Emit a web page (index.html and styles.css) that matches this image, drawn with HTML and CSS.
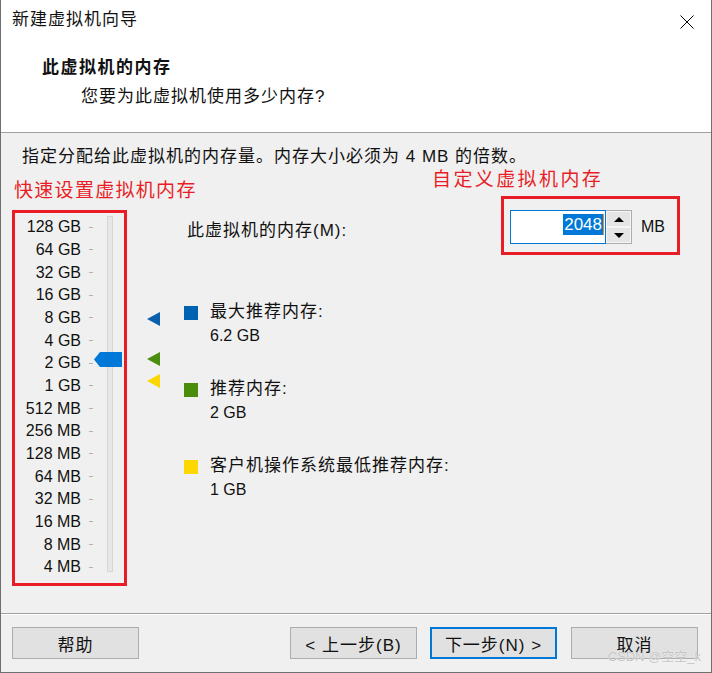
FILE: index.html
```html
<!DOCTYPE html>
<html lang="zh-CN">
<head>
    <meta charset="UTF-8">
    <title>新建虚拟机向导</title>
    <link rel="stylesheet" href="styles.css">
</head>
<body>
    <div class="window">
        <div class="titlebar">
            <span class="title">新建虚拟机向导</span>
            <svg class="close" width="14" height="14" viewBox="0 0 14 14">
                <path d="M0.5 0.5 L13.5 13.5 M13.5 0.5 L0.5 13.5" stroke="#000" stroke-width="1" fill="none"/>
            </svg>
        </div>

        <div class="header">
            <h1>此虚拟机的内存</h1>
            <p>您要为此虚拟机使用多少内存?</p>
        </div>

        <div class="content">
            <p class="desc">指定分配给此虚拟机的内存量。内存大小必须为 4 MB 的倍数。</p>

            <div class="main">
                <div class="quick">
                    <div class="note">快速设置虚拟机内存</div>
                    <div class="scale-box">
                        <div class="scale-rows">
                            <div class="scale-row"><span class="scale-label">128 GB</span><span class="tick"></span></div>
                            <div class="scale-row"><span class="scale-label">64 GB</span><span class="tick"></span></div>
                            <div class="scale-row"><span class="scale-label">32 GB</span><span class="tick"></span></div>
                            <div class="scale-row"><span class="scale-label">16 GB</span><span class="tick"></span></div>
                            <div class="scale-row"><span class="scale-label">8 GB</span><span class="tick"></span></div>
                            <div class="scale-row"><span class="scale-label">4 GB</span><span class="tick"></span></div>
                            <div class="scale-row"><span class="scale-label">2 GB</span><span class="tick"></span></div>
                            <div class="scale-row"><span class="scale-label">1 GB</span><span class="tick"></span></div>
                            <div class="scale-row"><span class="scale-label">512 MB</span><span class="tick"></span></div>
                            <div class="scale-row"><span class="scale-label">256 MB</span><span class="tick"></span></div>
                            <div class="scale-row"><span class="scale-label">128 MB</span><span class="tick"></span></div>
                            <div class="scale-row"><span class="scale-label">64 MB</span><span class="tick"></span></div>
                            <div class="scale-row"><span class="scale-label">32 MB</span><span class="tick"></span></div>
                            <div class="scale-row"><span class="scale-label">16 MB</span><span class="tick"></span></div>
                            <div class="scale-row"><span class="scale-label">8 MB</span><span class="tick"></span></div>
                            <div class="scale-row"><span class="scale-label">4 MB</span><span class="tick"></span></div>
                        </div>
                        <div class="track">
                            <div class="thumb"></div>
                        </div>
                    </div>
                </div>

                <div class="markers">
                    <span class="marker marker-max"></span>
                    <span class="marker marker-rec"></span>
                    <span class="marker marker-min"></span>
                </div>

                <div class="custom">
                    <div class="note note-right">自定义虚拟机内存</div>
                    <div class="mem-row">
                        <span class="mem-label">此虚拟机的内存(M):</span>
                        <div class="mem-box">
                            <div class="mem-input"><span class="sel">2048</span><span class="caret"></span></div>
                            <div class="spin">
                                <span class="spin-btn"><span class="arrow-up"></span></span>
                                <span class="spin-btn"><span class="arrow-down"></span></span>
                            </div>
                            <span class="unit">MB</span>
                        </div>
                    </div>

                    <div class="legend">
                        <div class="legend-item">
                            <span class="swatch swatch-max"></span>
                            <div>
                                <div class="legend-label">最大推荐内存:</div>
                                <div class="legend-value">6.2 GB</div>
                            </div>
                        </div>
                        <div class="legend-item">
                            <span class="swatch swatch-rec"></span>
                            <div>
                                <div class="legend-label">推荐内存:</div>
                                <div class="legend-value">2 GB</div>
                            </div>
                        </div>
                        <div class="legend-item">
                            <span class="swatch swatch-min"></span>
                            <div>
                                <div class="legend-label">客户机操作系统最低推荐内存:</div>
                                <div class="legend-value">1 GB</div>
                            </div>
                        </div>
                    </div>
                </div>
            </div>
        </div>

        <div class="footer">
            <button class="btn">帮助</button>
            <button class="btn btn-back">&lt; 上一步(B)</button>
            <button class="btn btn-next">下一步(N) &gt;</button>
            <button class="btn">取消</button>
        </div>

        <div class="watermark">CSDN @空空_k</div>
    </div>
</body>
</html>
```

FILE: styles.css
```css
* {
    box-sizing: border-box;
}
body {
    margin: 0;
    font-family: "Liberation Sans", "Noto Sans CJK SC", sans-serif;
    color: #111;
    background-color: #fff;
}
.window {
    position: relative;
    width: 712px;
    height: 673px;
    display: flex;
    flex-direction: column;
    border: 1px solid #6f6f6f;
    border-top: none;
    background-color: #fff;
}

/* title + header */
.titlebar {
    height: 40px;
    display: flex;
    align-items: center;
    justify-content: space-between;
    padding: 0 17px 0 11px;
}
.title {
    font-size: 17px;
    letter-spacing: 1px;
    line-height: 40px;
}
.close {
    margin-top: 4px;
}
.header {
    height: 93px;
    border-bottom: 1px solid #a0a0a0;
}
.header h1 {
    margin: 16px 0 0 41px;
    font-size: 17px;
    letter-spacing: 1.5px;
    line-height: 24px;
    font-weight: bold;
}
.header p {
    margin: 5px 0 0 80px;
    font-size: 17px;
    letter-spacing: 1px;
    line-height: 24px;
}

/* body */
.content {
    flex: 1;
    background-color: #f0f0f0;
    padding-top: 13px;
}
.desc {
    margin: 0 0 0 21px;
    font-size: 17px;
    letter-spacing: 1px;
    line-height: 22px;
}
.main {
    display: flex;
    align-items: flex-start;
    padding-right: 31px;
}
.note {
    color: #e81d25;
    font-size: 19px;
    line-height: 24px;
    white-space: nowrap;
}
.quick {
    width: 126px;
    flex-shrink: 0;
    padding-left: 11px;
}
.quick .note {
    margin-top: 11px;
    padding-left: 2px;
    letter-spacing: 1.3px;
}
.scale-box {
    margin-top: 7px;
    width: 115px;
    display: flex;
    align-items: flex-start;
    border: 3px solid #e81d25;
    padding: 3px 11px 4px 0;
}
.scale-row {
    height: 22.67px;
    display: flex;
    align-items: center;
}
.scale-label {
    width: 66px;
    text-align: right;
    font-size: 16px;
}
.tick {
    width: 4px;
    height: 1px;
    margin-left: 8px;
    background-color: #b0b0b0;
}
.track {
    position: relative;
    width: 6px;
    height: 356px;
    margin: 0 0 0 14px;
    background-color: #e7e7e7;
    border: 1px solid #d6d6d6;
}
.thumb {
    position: absolute;
    left: -14px;
    top: 135px;
    width: 28px;
    height: 15px;
    background-color: #0078d7;
    clip-path: polygon(0 50%, 6px 0, 100% 0, 100% 100%, 6px 100%);
}

/* markers next to the slider */
.markers {
    position: relative;
    flex-shrink: 0;
    width: 13px;
    height: 300px;
    margin-left: 20px;
}
.marker {
    position: absolute;
    left: 0;
    width: 0;
    height: 0;
    border-top: 7px solid transparent;
    border-bottom: 7px solid transparent;
    border-right: 13px solid;
}
.marker-max {
    top: 144px;
    border-right-color: #0c5fad;
}
.marker-rec {
    top: 184px;
    border-right-color: #4b8d0e;
}
.marker-min {
    top: 206px;
    border-right-color: #fcd600;
}

/* custom memory */
.custom {
    flex: 1;
    margin-left: 27px;
}
.note-right {
    padding-left: 245px;
    letter-spacing: 2.4px;
}
.mem-row {
    margin-top: 4px;
    display: flex;
    align-items: center;
}
.mem-label {
    margin-top: 5px;
    font-size: 17px;
    letter-spacing: 1px;
}
.mem-box {
    margin-left: auto;
    width: 179px;
    display: flex;
    align-items: center;
    border: 3px solid #e81d25;
    padding: 11px 3px 8px 6px;
}
.mem-input {
    width: 96px;
    height: 34px;
    display: flex;
    align-items: center;
    justify-content: flex-end;
    padding-right: 1px;
    background-color: #fff;
    border: 1px solid #0078d7;
}
.sel {
    background-color: #0078d7;
    color: #fff;
    font-size: 17px;
    line-height: 21px;
    padding: 0 1px;
    margin-top: -6px;
}
.caret {
    width: 1px;
    height: 21px;
    margin-top: -6px;
    background-color: #f08a24;
}
.spin {
    width: 26px;
    height: 34px;
    display: flex;
    flex-direction: column;
    border: 1px solid #adadad;
    border-left: none;
    background-color: #fff;
}
.spin-btn {
    flex: 1;
    display: flex;
    align-items: center;
    justify-content: center;
    background-color: #e5e5e5;
    border: 1px solid #f6f6f6;
}
.arrow-up, .arrow-down {
    width: 0;
    height: 0;
    border-left: 5px solid transparent;
    border-right: 5px solid transparent;
}
.arrow-up {
    border-bottom: 5px solid #000;
}
.arrow-down {
    border-top: 5px solid #000;
}
.unit {
    margin-left: 9px;
    font-size: 16px;
}

/* legend */
.legend {
    margin-top: 45px;
    margin-left: -3px;
}
.legend-item {
    display: flex;
    gap: 12px;
    margin-bottom: 29px;
}
.swatch {
    width: 14px;
    height: 14px;
    margin-top: 6px;
}
.swatch-max {
    background-color: #0063b1;
}
.swatch-rec {
    background-color: #4a8c0c;
}
.swatch-min {
    background-color: #fcd800;
}
.legend-label {
    font-size: 17px;
    letter-spacing: 1px;
    line-height: 24px;
}
.legend-value {
    font-size: 16px;
    line-height: 24px;
}

/* footer */
.footer {
    height: 59px;
    display: flex;
    align-items: flex-start;
    padding: 13px 13px 0 11px;
    background-color: #f0f0f0;
    border-top: 1px solid #a0a0a0;
    box-shadow: inset 0 1px 0 #fff;
}
.btn {
    width: 127px;
    height: 32px;
    font-family: "Liberation Sans", "Noto Sans CJK SC", sans-serif;
    font-size: 17px;
    letter-spacing: 1px;
    color: #111;
    background-color: #e1e1e1;
    border: 1px solid #adadad;
    padding: 0;
}
.btn-back {
    margin-left: auto;
}
.btn-next {
    margin-left: 13px;
    border: 2px solid #0078d7;
}
.btn-next + .btn {
    margin-left: 14px;
}
.watermark {
    position: absolute;
    right: 10px;
    bottom: 7px;
    font-size: 13px;
    color: #c4c4c4;
    text-shadow: 0 0 1px #fff;
}
```
